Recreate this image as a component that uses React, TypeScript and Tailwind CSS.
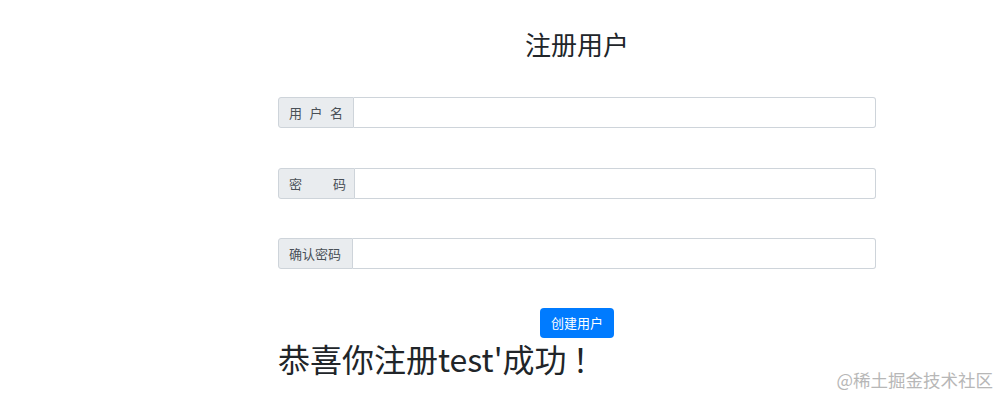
const font = { fontFamily: '"Noto Sans CJK SC", "Noto Sans", sans-serif' };

function Field({ label, wide, top }: { label: React.ReactNode; wide: string; top: string }) {
  return (
    <div className={`flex h-[31px] w-full ${top}`}>
      <span
        className={`flex items-center ${wide} shrink-0 pl-[10px] pr-[8px] whitespace-nowrap bg-[#e9ecef] border border-[#ced4da] rounded-l-[3px] text-[13px] text-[#495057]`}
      >
        {label}
      </span>
      <input className="flex-1 border border-l-0 border-[#ced4da] rounded-r-[3px] bg-white outline-none" />
    </div>
  );
}

export default function App() {
  return (
    <div className="relative w-[1000px] h-[396px] bg-white overflow-hidden text-[#212529]" style={font}>
      <div className="ml-[278px] w-[598px] flex flex-col items-center">
        <h2 className="mt-[27px] h-[34px] leading-[34px] text-[26px]">注册用户</h2>
        <div className="mt-[36px] w-full flex flex-col">
          <Field
            top=""
            wide="w-[76px]"
            label={<span className="tracking-[7.5px]">用户名</span>}
          />
          <Field
            top="mt-[40px]"
            wide="w-[77px]"
            label={
              <span className="flex w-full justify-between">
                <span>密</span>
                <span>码</span>
              </span>
            }
          />
          <Field top="mt-[39px]" wide="w-[75px]" label="确认密码" />
        </div>
        <button className="mt-[39px] w-[74px] h-[30px] bg-[#007bff] text-white text-[13px] rounded-[4px]">
          创建用户
        </button>
        <h1 className="self-start h-[40px] leading-[40px] text-[32px] mt-0 whitespace-nowrap">
          恭喜你注册test'成功<span className="ml-[6px]">！</span>
        </h1>
      </div>
      <div className="absolute right-[7px] bottom-[6px] text-[17.5px] text-[#b7b7b7] leading-[20px]">
        @稀土掘金技术社区
      </div>
    </div>
  );
}
